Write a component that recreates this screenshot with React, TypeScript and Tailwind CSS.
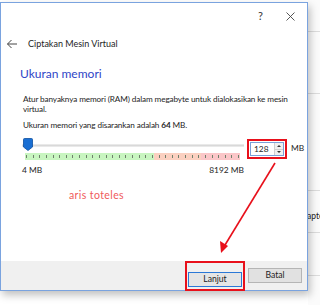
import React from "react";

const ticks = Array.from({ length: 33 });

export default function App() {
  return (
    <div className="relative w-[320px] h-[305px] overflow-hidden bg-white text-[#1e1e1e] font-['Lato',sans-serif]">
      <div className="flex h-full">
        {/* DIALOG */}
        <div className="mt-[2px] w-[308px] h-[289px] shrink-0 flex flex-col border border-[#7aa3df] bg-white shadow-[2px_4px_8px_rgba(0,0,0,0.25)] z-10">
          {/* title bar */}
          <div className="h-[26px] flex items-center justify-end gap-[23px] pr-[12px] text-[11px] text-[#333]">
            <span>?</span>
            <svg width="9" height="9" viewBox="0 0 9 9">
              <path d="M0.5 0.5L8.5 8.5M8.5 0.5L0.5 8.5" stroke="#444" strokeWidth="0.9" />
            </svg>
          </div>

          {/* header */}
          <div className="mt-[4px] h-[22px] flex items-center pl-[5px] text-[9px]">
            <svg width="12" height="10" viewBox="0 0 12 10" className="mr-[10px]">
              <path d="M11 5H1.5M5.5 1L1.5 5l4 4" fill="none" stroke="#444" strokeWidth="1" />
            </svg>
            <span>Ciptakan Mesin Virtual</span>
          </div>

          {/* heading */}
          <div className="mt-[10px] pl-[19px] text-[12px] text-[#2f45c7]">Ukuran memori</div>

          {/* body */}
          <div className="mt-[11px] pl-[22px] pr-[4px] text-[8.2px] tracking-[-0.12px] leading-[10px] whitespace-nowrap">
            <p>
              Atur banyaknya memori (RAM) dalam megabyte untuk dialokasikan ke mesin
              <br />
              virtual.
            </p>
            <p className="mt-[6px]">
              Ukuran memori yang disarankan adalah <b>64</b> MB.
            </p>
          </div>

          {/* slider row */}
          <div className="mt-[8px] flex items-start pl-[21px]">
            <div className="w-[222px] flex flex-col">
              <div className="relative h-[13px]">
                <div className="absolute left-0 right-0 top-[6px] h-[3px] bg-[#d9d9d9] border-y border-[#e9e9e9]" />
                <svg width="10" height="13" viewBox="0 0 10 13" className="absolute left-[1px] top-0">
                  <path d="M0.5 1.5Q0.5 0.5 1.5 0.5H8.5Q9.5 0.5 9.5 1.5V9L5 12.5L0.5 9Z" fill="#1a6fd3" stroke="#0d4fa0" strokeWidth="0.8" />
                </svg>
              </div>
              <div className="mt-[2px] ml-[3px] mr-[4px] h-[7px] flex">
                <div className="w-[129px] bg-[#c8f5c0]" />
                <div className="w-[47px] bg-[#fbd0c0]" />
                <div className="flex-1 bg-[#fbc6c8]" />
              </div>
              <div className="-mt-[7px] ml-[3px] mr-[4px] h-[7px] flex justify-between items-center px-[1px]">
                {ticks.map((_, i) => (
                  <div key={i} className="w-[1px] h-[3px] bg-[#6f806c]" />
                ))}
              </div>
              <div className="mt-[4px] flex justify-between text-[8.4px]">
                <span>4 MB</span>
                <span>8192 MB</span>
              </div>
            </div>

            {/* spin box */}
            <div className="ml-[3px] mt-[1px] border-2 border-[#e8101b] p-[1px]">
              <div className="w-[34px] h-[14px] flex border border-[#7aa0d8] bg-white">
                <span className="flex-1 pl-[3px] text-[8.4px] leading-[12px]">128</span>
                <div className="w-[9px] flex flex-col border-l border-[#d0d0d0] bg-[#f0f0f0]">
                  <div className="flex-1 flex items-center justify-center border-b border-[#d0d0d0]">
                    <div className="border-x-[2px] border-x-transparent border-b-[2px] border-b-[#333]" />
                  </div>
                  <div className="flex-1 flex items-center justify-center">
                    <div className="border-x-[2px] border-x-transparent border-t-[2px] border-t-[#333]" />
                  </div>
                </div>
              </div>
            </div>
            <span className="ml-[4px] mt-[4px] text-[8.4px]">MB</span>
          </div>

          {/* note */}
          <div className="mt-[11px] pl-[68px] text-[10.5px] tracking-[0.4px] text-[#f05a5a]">aris toteles</div>

          <div className="flex-1" />

          {/* footer */}
          <div className="h-[29px] bg-[#f0f0f0] flex items-center justify-end gap-[2px] pr-[5px]">
            <div className="border-2 border-[#e8101b] p-[1px]">
              <button className="w-[54px] h-[15px] border border-[#2b78d6] bg-[#e5e5e5] text-[8.6px] leading-[13px] text-[#222]">
                Lanjut
              </button>
            </div>
            <button className="ml-[1px] w-[54px] h-[15px] border border-[#b5b5b5] bg-[#e1e1e1] text-[8.6px] leading-[13px] text-[#222]">
              Batal
            </button>
          </div>
        </div>

        {/* background window strip */}
        <div className="flex-1 flex flex-col bg-[#fbfbfb] text-[8.5px] text-[#222]">
          <div className="mt-[31px] h-[1px] bg-[#dcdcdc]" />
          <div className="mt-[61px] h-[1px] bg-[#dcdcdc]" />
          <div className="mt-[96px] h-[1px] bg-[#dcdcdc]" />
          <span className="mt-[19px] -ml-[1px] whitespace-nowrap">apte</span>
          <div className="mt-[9px] h-[1px] bg-[#dcdcdc]" />
          <div className="mt-[42px] h-[1px] bg-[#dcdcdc]" />
        </div>
      </div>

      {/* annotation arrow */}
      <svg width="320" height="305" className="absolute left-0 top-0 z-20 pointer-events-none">
        <line x1="275" y1="163" x2="225" y2="245" stroke="#e8101b" strokeWidth="1.6" />
        <path d="M221 253L220 241L228 246Z" fill="#e8101b" />
      </svg>
    </div>
  );
}
